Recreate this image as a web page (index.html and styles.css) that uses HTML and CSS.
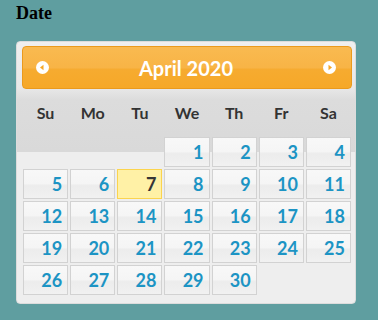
FILE: index.html
```html
<!DOCTYPE html>
<html>
	<head>
		<meta charset="UTF-8">
		<title>Date</title>
		<link rel="stylesheet" href="styles.css">
	</head>
	<body>
		<div class="label">Date</div>
		<div class="picker">
			<div class="picker-head">
				<a class="nav" href="javascript:;">
					<svg width="13" height="13" viewBox="0 0 13 13"><circle cx="6.5" cy="6.5" r="6.5" fill="#fff"/><path d="M4 6.5 L7.5 3.8 L7.5 9.2 Z" fill="#f6a828"/></svg>
				</a>
				<span class="title">April 2020</span>
				<a class="nav" href="javascript:;">
					<svg width="13" height="13" viewBox="0 0 13 13"><circle cx="6.5" cy="6.5" r="6.5" fill="#fff"/><path d="M9 6.5 L5.5 3.8 L5.5 9.2 Z" fill="#f6a828"/></svg>
				</a>
			</div>
			<table class="days">
				<thead>
					<tr>
						<th>Su</th><th>Mo</th><th>Tu</th><th>We</th><th>Th</th><th>Fr</th><th>Sa</th>
					</tr>
				</thead>
				<tbody>
					<tr>
						<td></td><td></td><td></td>
						<td><a href="javascript:;">1</a></td>
						<td><a href="javascript:;">2</a></td>
						<td><a href="javascript:;">3</a></td>
						<td><a href="javascript:;">4</a></td>
					</tr>
					<tr>
						<td><a href="javascript:;">5</a></td>
						<td><a href="javascript:;">6</a></td>
						<td><a class="today" href="javascript:;">7</a></td>
						<td><a href="javascript:;">8</a></td>
						<td><a href="javascript:;">9</a></td>
						<td><a href="javascript:;">10</a></td>
						<td><a href="javascript:;">11</a></td>
					</tr>
					<tr>
						<td><a href="javascript:;">12</a></td>
						<td><a href="javascript:;">13</a></td>
						<td><a href="javascript:;">14</a></td>
						<td><a href="javascript:;">15</a></td>
						<td><a href="javascript:;">16</a></td>
						<td><a href="javascript:;">17</a></td>
						<td><a href="javascript:;">18</a></td>
					</tr>
					<tr>
						<td><a href="javascript:;">19</a></td>
						<td><a href="javascript:;">20</a></td>
						<td><a href="javascript:;">21</a></td>
						<td><a href="javascript:;">22</a></td>
						<td><a href="javascript:;">23</a></td>
						<td><a href="javascript:;">24</a></td>
						<td><a href="javascript:;">25</a></td>
					</tr>
					<tr>
						<td><a href="javascript:;">26</a></td>
						<td><a href="javascript:;">27</a></td>
						<td><a href="javascript:;">28</a></td>
						<td><a href="javascript:;">29</a></td>
						<td><a href="javascript:;">30</a></td>
						<td></td><td></td>
					</tr>
				</tbody>
			</table>
		</div>
	</body>
</html>
```

FILE: styles.css
```css
* {
	margin: 0;
	padding: 0;
	box-sizing: border-box;
}

html {
	background: #5f9ea0;
}

body {
	padding: 0 16px;
	font-family: "Liberation Serif", serif;
}

.label {
	margin-top: 3px;
	font-size: 18px;
	line-height: 20px;
	font-weight: bold;
	color: #000;
}

.picker {
	width: 340px;
	margin-top: 18px;
	padding: 4px 3px 0 5px;
	border: 1px solid #dcdcdc;
	border-radius: 4px;
	font-family: Lato, "Open Sans", sans-serif;
	background: linear-gradient(to bottom, #efefef 0, #e8e8e8 46px, #dcdcdc 58px, #d9d9d9 110px, #eeeeee 110px);
}

.picker-head {
	height: 43px;
	display: flex;
	align-items: center;
	justify-content: space-between;
	padding: 0 15px 0 13px;
	border: 1px solid #eb9a1c;
	border-radius: 4px;
	background: linear-gradient(to bottom, #f9ba50 0, #f8b446 50%, #f6ab30 55%, #f6a828 100%);
}

.nav {
	display: flex;
	width: 13px;
	height: 13px;
}

.title {
	font-size: 20px;
	font-weight: bold;
	color: #fff;
	line-height: 24px;
}

.days {
	width: 100%;
	border-collapse: collapse;
	margin-bottom: 7px;
}

.days th {
	padding: 14px 4px;
	line-height: 19px;
	font-size: 16px;
	font-weight: bold;
	color: #333;
	text-align: center;
}

.days td {
	padding: 1px;
}

.days td a {
	display: block;
	padding: 4px 5px;
	line-height: 20px;
	font-size: 18px;
	font-weight: bold;
	text-align: right;
	text-decoration: none;
	color: #1c94c4;
	border: 1px solid #d2d2d2;
	background: linear-gradient(to bottom, #f8f8f8 0, #f5f5f5 48%, #ececec 56%, #f1f1f1 100%);
}

.days td a.today {
	color: #363636;
	border-color: #fbd44e;
	background: #fff1a6;
}
```
